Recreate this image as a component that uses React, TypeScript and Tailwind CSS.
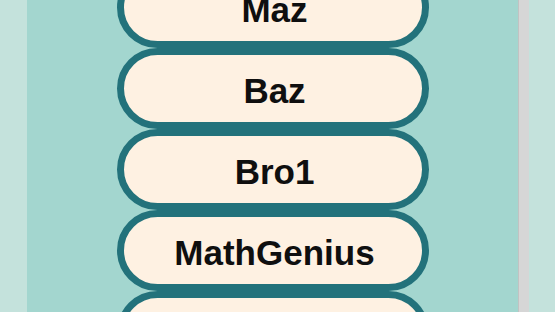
export default function App() {
  const players = ["Maz", "Baz", "Bro1", "MathGenius", "Zed"]

  return (
    <div className="flex h-[312px] w-[555px] overflow-hidden bg-[#c4e2dc]">
      <div className="w-[27px] shrink-0" />

      {/* main list */}
      <div className="flex flex-1 flex-col items-center bg-[#a3d6cf]">
        <div className="mt-[-33px] flex flex-col">
          {players.map((name) => (
            <button
              key={name}
              className="flex h-[81px] w-[312px] items-center justify-center rounded-full border-[7px] border-[#23727b] bg-[#fef1e2] pt-[4px] pl-[4px] text-[35px] leading-none font-bold text-[#0f0f0f] font-['Liberation_Sans',Arial,sans-serif]"
            >
              {name}
            </button>
          ))}
        </div>
      </div>

      {/* scrollbar */}
      <div className="w-[11px] shrink-0 border-l border-[#c2c2c2] bg-[#d6d6d6]" />
      <div className="w-[26px] shrink-0" />
    </div>
  )
}
